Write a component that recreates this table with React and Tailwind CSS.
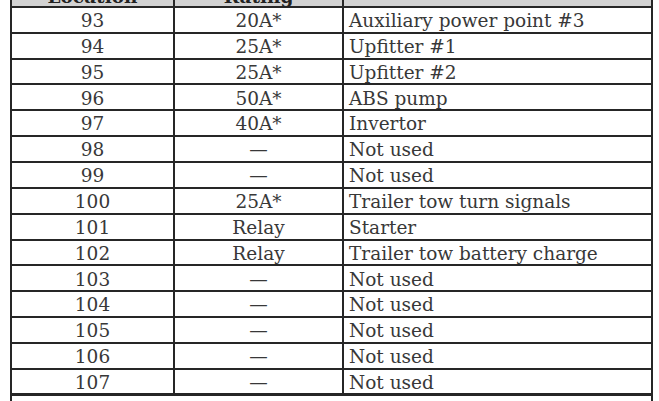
const rows = [
  ["93", "20A*", "Auxiliary power point #3"],
  ["94", "25A*", "Upfitter #1"],
  ["95", "25A*", "Upfitter #2"],
  ["96", "50A*", "ABS pump"],
  ["97", "40A*", "Invertor"],
  ["98", "—", "Not used"],
  ["99", "—", "Not used"],
  ["100", "25A*", "Trailer tow turn signals"],
  ["101", "Relay", "Starter"],
  ["102", "Relay", "Trailer tow battery charge"],
  ["103", "—", "Not used"],
  ["104", "—", "Not used"],
  ["105", "—", "Not used"],
  ["106", "—", "Not used"],
  ["107", "—", "Not used"],
];

function Row({ cells, last }) {
  return (
    <div
      className={`flex h-[25.87px] border-[#262626] ${last ? "border-b-[3px]" : "border-b-2"}`}
    >
      <div className="w-[163px] shrink-0 border-r-2 border-[#262626] flex items-center justify-center pt-[3px]">
        {cells[0]}
      </div>
      <div className="w-[169px] shrink-0 border-r-2 border-[#262626] flex items-center justify-center pt-[3px]">
        {cells[1]}
      </div>
      <div className="flex-1 flex items-center pl-[5px] pt-[3px]">{cells[2]}</div>
    </div>
  );
}

export default function App() {
  return (
    <div className="w-[659px] h-[401px] overflow-hidden bg-white">
      <div
        className="ml-[10px] w-[643px] -mt-[18px] border-x-2 border-[#262626] text-[#383838] text-[18.5px] leading-none"
        style={{ fontFamily: '"DejaVu Serif", "Liberation Serif", serif' }}
      >
        <div className="flex h-[25.87px] border-b-2 border-[#262626] bg-[#d2d2d2] font-bold text-[#222]">
          <div className="w-[163px] shrink-0 border-r-2 border-[#262626] flex items-center justify-center pt-[7px]">
            Location
          </div>
          <div className="w-[169px] shrink-0 border-r-2 border-[#262626] flex items-center justify-center pt-[7px]">
            Rating
          </div>
          <div className="flex-1" />
        </div>
        {rows.map((r, i) => (
          <Row key={r[0]} cells={r} last={i === rows.length - 1} />
        ))}
        <div className="h-[20px]" />
      </div>
    </div>
  );
}
